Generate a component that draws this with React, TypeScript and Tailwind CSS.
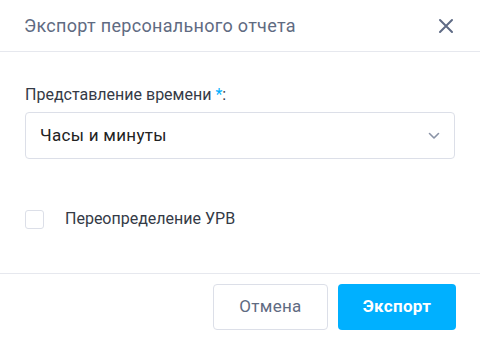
import React from "react";

export default function App() {
  return (
    <div
      className="w-[480px] h-[340px] bg-white overflow-hidden flex flex-col"
      style={{ fontFamily: "Roboto, 'Noto Sans', sans-serif" }}
    >
      <div className="h-[52px] flex items-center justify-between pl-[24px] pr-[26px] border-b border-[#e6e8ee]">
        <span className="text-[18px] tracking-[0.3px] text-[#5f6b82]">Экспорт персонального отчета</span>
        <svg width="16" height="16" viewBox="0 0 16 16" className="text-[#5f6b85]">
          <path d="M2 2L14 14M14 2L2 14" stroke="currentColor" strokeWidth="2" strokeLinecap="round" />
        </svg>
      </div>
      <div className="flex-1 px-[25px] pt-[33px]">
        <div className="text-[16px] leading-[20px] text-[#343a46]">
          Представление времени <span className="text-[#00b0ff]">*</span>:
        </div>
        <div className="mt-[7px] h-[47px] w-[430px] border border-[#dcdfe8] rounded-[4px] flex items-center justify-between pl-[14px] pr-[14px]">
          <span className="text-[17px] tracking-[0.3px] text-[#222222]">Часы и минуты</span>
          <svg width="12" height="8" viewBox="0 0 12 8" className="text-[#8a93a6]">
            <path d="M1.5 1.5L6 6L10.5 1.5" stroke="currentColor" strokeWidth="1.6" fill="none" strokeLinecap="round" strokeLinejoin="round" />
          </svg>
        </div>
        <div className="mt-[48px] flex items-center gap-[21px]">
          <div className="w-[19px] h-[19px] border border-[#dcdfe8] rounded-[3px]" />
          <span className="text-[16px] text-[#343a46]">Переопределение УРВ</span>
        </div>
      </div>
      <div className="h-[67px] border-t border-[#e6e8ee] flex items-center justify-end gap-[10px] pr-[24px]">
        <button className="w-[115px] h-[46px] border border-[#dcdfe8] rounded-[4px] text-[17px] tracking-[0.3px] text-[#5f6b82] bg-white">
          Отмена
        </button>
        <button className="w-[118px] h-[46px] rounded-[4px] text-[17px] tracking-[0.3px] font-bold text-white bg-[#00b0ff]">
          Экспорт
        </button>
      </div>
    </div>
  );
}
